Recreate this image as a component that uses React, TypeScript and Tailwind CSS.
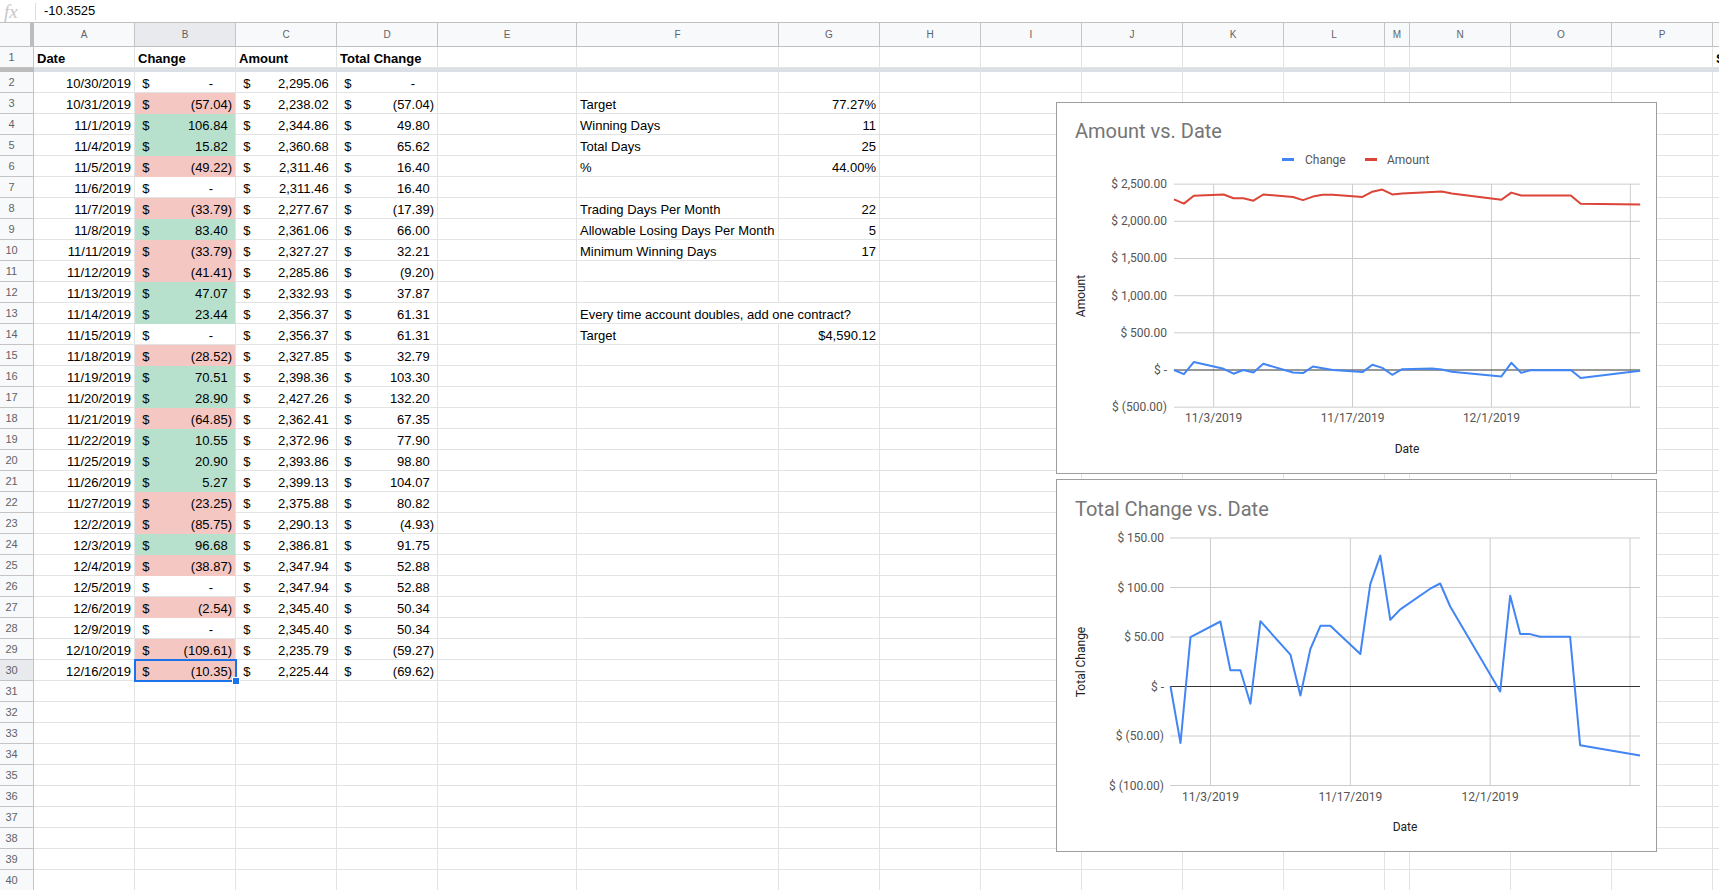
import React from "react";

type Col = { k: string; w: string };

const COLS: Col[] = [
  { k: "A", w: "w-[101px]" },
  { k: "B", w: "w-[101px]" },
  { k: "C", w: "w-[101px]" },
  { k: "D", w: "w-[101px]" },
  { k: "E", w: "w-[139px]" },
  { k: "F", w: "w-[202px]" },
  { k: "G", w: "w-[101px]" },
  { k: "H", w: "w-[101px]" },
  { k: "I", w: "w-[101px]" },
  { k: "J", w: "w-[101px]" },
  { k: "K", w: "w-[101px]" },
  { k: "L", w: "w-[101px]" },
  { k: "M", w: "w-[25px]" },
  { k: "N", w: "w-[101px]" },
  { k: "O", w: "w-[101px]" },
  { k: "P", w: "w-[101px]" },
  { k: "", w: "w-[101px]" },
];

const DATA: [string, string, string, string][] = [
  ["10/30/2019", "-", "2,295.06", "-"],
  ["10/31/2019", "(57.04)", "2,238.02", "(57.04)"],
  ["11/1/2019", "106.84", "2,344.86", "49.80"],
  ["11/4/2019", "15.82", "2,360.68", "65.62"],
  ["11/5/2019", "(49.22)", "2,311.46", "16.40"],
  ["11/6/2019", "-", "2,311.46", "16.40"],
  ["11/7/2019", "(33.79)", "2,277.67", "(17.39)"],
  ["11/8/2019", "83.40", "2,361.06", "66.00"],
  ["11/11/2019", "(33.79)", "2,327.27", "32.21"],
  ["11/12/2019", "(41.41)", "2,285.86", "(9.20)"],
  ["11/13/2019", "47.07", "2,332.93", "37.87"],
  ["11/14/2019", "23.44", "2,356.37", "61.31"],
  ["11/15/2019", "-", "2,356.37", "61.31"],
  ["11/18/2019", "(28.52)", "2,327.85", "32.79"],
  ["11/19/2019", "70.51", "2,398.36", "103.30"],
  ["11/20/2019", "28.90", "2,427.26", "132.20"],
  ["11/21/2019", "(64.85)", "2,362.41", "67.35"],
  ["11/22/2019", "10.55", "2,372.96", "77.90"],
  ["11/25/2019", "20.90", "2,393.86", "98.80"],
  ["11/26/2019", "5.27", "2,399.13", "104.07"],
  ["11/27/2019", "(23.25)", "2,375.88", "80.82"],
  ["12/2/2019", "(85.75)", "2,290.13", "(4.93)"],
  ["12/3/2019", "96.68", "2,386.81", "91.75"],
  ["12/4/2019", "(38.87)", "2,347.94", "52.88"],
  ["12/5/2019", "-", "2,347.94", "52.88"],
  ["12/6/2019", "(2.54)", "2,345.40", "50.34"],
  ["12/9/2019", "-", "2,345.40", "50.34"],
  ["12/10/2019", "(109.61)", "2,235.79", "(59.27)"],
  ["12/16/2019", "(10.35)", "2,225.44", "(69.62)"],
];

const SIDE: Record<number, [string, string]> = {
  3: ["Target", "77.27%"],
  4: ["Winning Days", "11"],
  5: ["Total Days", "25"],
  6: ["%", "44.00%"],
  8: ["Trading Days Per Month", "22"],
  9: ["Allowable Losing Days Per Month", "5"],
  10: ["Minimum Winning Days", "17"],
  13: ["Every time account doubles, add one contract?", ""],
  14: ["Target", "$4,590.12"],
};

const DAYS = [0, 1, 2, 5, 6, 7, 8, 9, 12, 13, 14, 15, 16, 19, 20, 21, 22, 23, 26, 27, 28, 33, 34, 35, 36, 37, 40, 41, 47];
const AMOUNT = [2295.06, 2238.02, 2344.86, 2360.68, 2311.46, 2311.46, 2277.67, 2361.06, 2327.27, 2285.86, 2332.93, 2356.37, 2356.37, 2327.85, 2398.36, 2427.26, 2362.41, 2372.96, 2393.86, 2399.13, 2375.88, 2290.13, 2386.81, 2347.94, 2347.94, 2345.4, 2345.4, 2235.79, 2225.44];
const CHANGE = [0, -57.04, 106.84, 15.82, -49.22, 0, -33.79, 83.4, -33.79, -41.41, 47.07, 23.44, 0, -28.52, 70.51, 28.9, -64.85, 10.55, 20.9, 5.27, -23.25, -85.75, 96.68, -38.87, 0, -2.54, 0, -109.61, -10.35];
const TOTAL = [0, -57.04, 49.8, 65.62, 16.4, 16.4, -17.39, 66.0, 32.21, -9.2, 37.87, 61.31, 61.31, 32.79, 103.3, 132.2, 67.35, 77.9, 98.8, 104.07, 80.82, -4.93, 91.75, 52.88, 52.88, 50.34, 50.34, -59.27, -69.62];

function Acc({ v }: { v: string }) {
  const neg = v.startsWith("(");
  const dash = v === "-";
  return (
    <div className="flex justify-between w-full">
      <span>
        <span className="invisible">(</span>$
      </span>
      <span>
        {dash ? (
          <>
            -<span className="invisible">00)</span>
          </>
        ) : neg ? (
          v
        ) : (
          <>
            {v}
            <span className="invisible">)</span>
          </>
        )}
      </span>
    </div>
  );
}

const cellBase =
  "shrink-0 h-full border-r border-b border-[#e2e3e3] px-[3px] pt-[4px] leading-[16px] whitespace-nowrap overflow-hidden";

function RowHeader({ n }: { n: number }) {
  return (
    <div
      className={`w-[34px] shrink-0 h-full border-r border-b border-[#c4c4c4] flex items-center text-[11px] text-[#5f6368] ${
        n === 30 ? "bg-[#e8eaed]" : "bg-[#f8f9fa]"
      }`}
    >
      <span className="w-[23px] text-center">{n}</span>
    </div>
  );
}

function DataRow({ n }: { n: number }) {
  const d = n >= 2 && n <= 30 ? DATA[n - 2] : null;
  const side = SIDE[n];
  const fill = d ? (d[1].startsWith("(") ? "r" : d[1] === "-" ? "" : "g") : "";
  return (
    <div className="flex h-[21px]">
      <RowHeader n={n} />
      {COLS.map((c) => {
        let content: React.ReactNode = null;
        let extra = "";
        if (d) {
          if (c.k === "A") {
            content = <div className="text-right">{d[0]}</div>;
          } else if (c.k === "B") {
            content = <Acc v={d[1]} />;
            if (fill === "r") extra = "bg-[#f4c7c3] border-b-[#f4c7c3]";
            if (fill === "g") extra = "bg-[#b7e1cd] border-b-[#b7e1cd]";
          } else if (c.k === "C") {
            content = <Acc v={d[2]} />;
          } else if (c.k === "D") {
            content = <Acc v={d[3]} />;
          }
        }
        if (side) {
          if (c.k === "F") {
            content = side[0];
            if (n === 13) extra = "overflow-visible border-r-transparent relative z-10";
          } else if (c.k === "G") {
            content = <div className="text-right">{side[1]}</div>;
          }
        }
        return (
          <div key={c.k + n} className={`${cellBase} ${c.w} ${extra}`}>
            {content}
          </div>
        );
      })}
    </div>
  );
}

function HeaderRow() {
  return (
    <div className="flex h-[24px] bg-[#f8f9fa] border-b border-[#c0c0c0]">
      <div className="w-[30px] shrink-0" />
      <div className="w-[4px] shrink-0 bg-[#bdbdbd]" />
      {COLS.map((c) => (
        <div
          key={"h" + c.k}
          className={`${c.w} shrink-0 h-full border-r border-[#c4c4c4] flex items-center justify-center text-[10px] text-[#5f6368] ${
            c.k === "B" ? "bg-[#e8eaed]" : ""
          }`}
        >
          {c.k}
        </div>
      ))}
    </div>
  );
}

function Row1() {
  const labels: Record<string, string> = { A: "Date", B: "Change", C: "Amount", D: "Total Change", "": "S" };
  return (
    <div className="flex h-[21px] font-bold">
      <div className="w-[34px] shrink-0 h-full border-r border-b border-[#c4c4c4] bg-[#f8f9fa] flex items-center text-[11px] text-[#5f6368] font-normal">
        <span className="w-[23px] text-center">1</span>
      </div>
      {COLS.map((c) => (
        <div key={"r1" + c.k} className={`${cellBase} ${c.w}`}>
          {labels[c.k] ?? ""}
        </div>
      ))}
    </div>
  );
}

function path(xs: number[], ys: number[]) {
  return xs.map((x, i) => `${i === 0 ? "M" : "L"}${x.toFixed(1)} ${ys[i].toFixed(1)}`).join(" ");
}

function AmountChart() {
  const x = (d: number) => 117 + d * 9.92;
  const y = (v: number) => 267 - v * (37.17 / 500);
  const ticks: [number, string][] = [
    [2500, "$ 2,500.00"],
    [2000, "$ 2,000.00"],
    [1500, "$ 1,500.00"],
    [1000, "$ 1,000.00"],
    [500, "$ 500.00"],
    [0, "$ -"],
    [-500, "$ (500.00)"],
  ];
  const vgrid: [number, string][] = [
    [4, "11/3/2019"],
    [18, "11/17/2019"],
    [32, "12/1/2019"],
    [46, ""],
  ];
  const xs = DAYS.map(x);
  return (
    <div className="absolute left-[1056px] top-[102px] w-[601px] h-[372px] border border-[#9e9e9e] bg-white">
      <svg width="599" height="370" className="font-['Roboto',Arial,sans-serif]">
        <text x="18" y="35" fontSize="20" fill="#757575">
          Amount vs. Date
        </text>
        <rect x="225" y="55" width="12" height="3" fill="#4285f4" />
        <text x="248" y="61" fontSize="12" fill="#555">
          Change
        </text>
        <rect x="308" y="55" width="12" height="3" fill="#db4437" />
        <text x="330" y="61" fontSize="12" fill="#555">
          Amount
        </text>
        {ticks.map(([v, l]) => (
          <g key={l}>
            {v !== 0 && <line x1="117" x2="583" y1={y(v)} y2={y(v)} stroke="#cccccc" strokeWidth="1" />}
            <text x="110" y={y(v) + 4} fontSize="12" fill="#555" textAnchor="end">
              {l}
            </text>
          </g>
        ))}
        {vgrid.map(([d, l]) => (
          <g key={d}>
            <line x1={x(d)} x2={x(d)} y1={y(2500)} y2={y(-500)} stroke="#cccccc" strokeWidth="1" />
            {l && (
              <text x={x(d)} y="319" fontSize="12" fill="#555" textAnchor="middle">
                {l}
              </text>
            )}
          </g>
        ))}
        <line x1="117" x2="583" y1={y(0)} y2={y(0)} stroke="#333" strokeWidth="1" />
        <path d={path(xs, AMOUNT.map(y))} fill="none" stroke="#db4437" strokeWidth="2" strokeLinejoin="round" />
        <path d={path(xs, CHANGE.map(y))} fill="none" stroke="#4285f4" strokeWidth="2" strokeLinejoin="round" />
        <text x="350" y="350" fontSize="12" fill="#222" textAnchor="middle">
          Date
        </text>
        <text transform="translate(28 193) rotate(-90)" fontSize="12" fill="#222" textAnchor="middle">
          Amount
        </text>
      </svg>
    </div>
  );
}

function TotalChart() {
  const x = (d: number) => 113.5 + d * 9.99;
  const y = (v: number) => 206.5 - v * (49.5 / 50);
  const ticks: [number, string][] = [
    [150, "$ 150.00"],
    [100, "$ 100.00"],
    [50, "$ 50.00"],
    [0, "$ -"],
    [-50, "$ (50.00)"],
    [-100, "$ (100.00)"],
  ];
  const vgrid: [number, string][] = [
    [4, "11/3/2019"],
    [18, "11/17/2019"],
    [32, "12/1/2019"],
    [46, ""],
  ];
  const xs = DAYS.map(x);
  return (
    <div className="absolute left-[1056px] top-[479px] w-[601px] h-[373px] border border-[#9e9e9e] bg-white">
      <svg width="599" height="371" className="font-['Roboto',Arial,sans-serif]">
        <text x="18" y="36" fontSize="20" fill="#757575">
          Total Change vs. Date
        </text>
        {ticks.map(([v, l]) => (
          <g key={l}>
            {v !== 0 && <line x1="113" x2="583" y1={y(v)} y2={y(v)} stroke="#cccccc" strokeWidth="1" />}
            <text x="107" y={y(v) + 4} fontSize="12" fill="#555" textAnchor="end">
              {l}
            </text>
          </g>
        ))}
        {vgrid.map(([d, l]) => (
          <g key={d}>
            <line x1={x(d)} x2={x(d)} y1={y(150)} y2={y(-100)} stroke="#cccccc" strokeWidth="1" />
            {l && (
              <text x={x(d)} y="321" fontSize="12" fill="#555" textAnchor="middle">
                {l}
              </text>
            )}
          </g>
        ))}
        <line x1="113" x2="583" y1={y(0)} y2={y(0)} stroke="#333" strokeWidth="1" />
        <path d={path(xs, TOTAL.map(y))} fill="none" stroke="#4285f4" strokeWidth="2" strokeLinejoin="round" />
        <text x="348" y="351" fontSize="12" fill="#222" textAnchor="middle">
          Date
        </text>
        <text transform="translate(28 182) rotate(-90)" fontSize="12" fill="#222" textAnchor="middle">
          Total Change
        </text>
      </svg>
    </div>
  );
}

export default function App() {
  const rows: number[] = [];
  for (let i = 2; i <= 40; i++) rows.push(i);
  return (
    <div className="relative w-[1719px] h-[890px] overflow-hidden bg-white text-black text-[13px] font-['Liberation_Sans',Arial,sans-serif]">
      <div className="h-[23px] flex items-center border-b border-[#c0c0c0] bg-white">
        <span className="w-[35px] shrink-0 pl-[4px] font-['Liberation_Serif',serif] italic text-[19px] leading-none text-[#c8c8c8]">
          fx
        </span>
        <span className="w-px h-[17px] bg-[#dadce0] shrink-0" />
        <span className="pl-[8px] text-[13px]">-10.3525</span>
      </div>
      <HeaderRow />
      <Row1 />
      <div className="flex h-[4px]">
        <div className="w-[34px] shrink-0 bg-[#bdbdbd]" />
        <div className="flex-1 bg-[#dbe0e6]" />
      </div>
      {rows.map((n) => (
        <DataRow key={n} n={n} />
      ))}
      <div className="absolute left-[134px] top-[659px] w-[103px] h-[23px] border-2 border-[#1a73e8] pointer-events-none" />
      <div className="absolute left-[232px] top-[677px] w-[8px] h-[8px] bg-[#1a73e8] border border-white" />
      <AmountChart />
      <TotalChart />
    </div>
  );
}
